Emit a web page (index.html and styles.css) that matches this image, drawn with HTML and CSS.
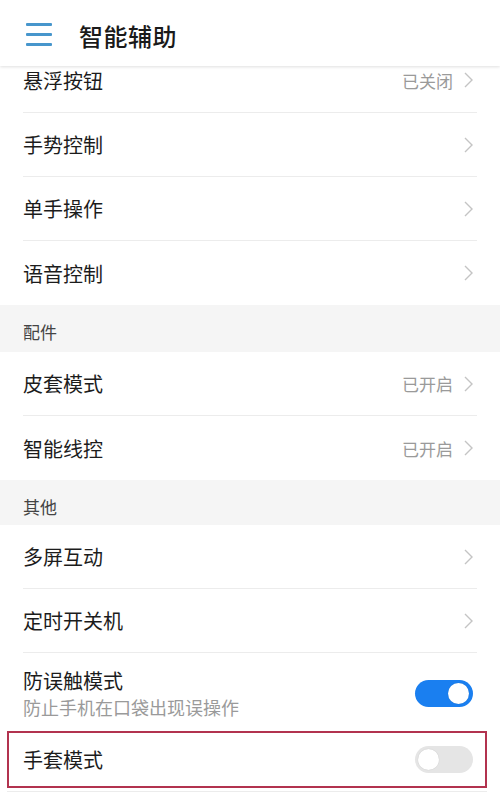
FILE: index.html
```html
<!DOCTYPE html>
<html lang="zh-CN">
<head>
  <meta charset="UTF-8">
  <title>智能辅助</title>
  <meta name="viewport" content="width=device-width, initial-scale=1.0">
  <link rel="stylesheet" href="styles.css">
</head>
<body>
  <header class="topbar">
    <span class="menu"><i></i><i></i><i></i></span>
    <h1>智能辅助</h1>
  </header>

  <div class="list">
    <div class="row cut">
      <span class="label">悬浮按钮</span>
      <span class="value">已关闭</span>
      <svg class="chev" viewBox="0 0 9 16"><polyline points="1,1 8,8 1,15"/></svg>
    </div>
    <div class="row">
      <span class="label">手势控制</span>
      <svg class="chev" viewBox="0 0 9 16"><polyline points="1,1 8,8 1,15"/></svg>
    </div>
    <div class="row">
      <span class="label">单手操作</span>
      <svg class="chev" viewBox="0 0 9 16"><polyline points="1,1 8,8 1,15"/></svg>
    </div>
    <div class="row last">
      <span class="label">语音控制</span>
      <svg class="chev" viewBox="0 0 9 16"><polyline points="1,1 8,8 1,15"/></svg>
    </div>

    <div class="section">配件</div>
    <div class="row">
      <span class="label">皮套模式</span>
      <span class="value">已开启</span>
      <svg class="chev" viewBox="0 0 9 16"><polyline points="1,1 8,8 1,15"/></svg>
    </div>
    <div class="row last">
      <span class="label">智能线控</span>
      <span class="value">已开启</span>
      <svg class="chev" viewBox="0 0 9 16"><polyline points="1,1 8,8 1,15"/></svg>
    </div>

    <div class="section other">其他</div>
    <div class="row">
      <span class="label">多屏互动</span>
      <svg class="chev" viewBox="0 0 9 16"><polyline points="1,1 8,8 1,15"/></svg>
    </div>
    <div class="row">
      <span class="label">定时开关机</span>
      <svg class="chev" viewBox="0 0 9 16"><polyline points="1,1 8,8 1,15"/></svg>
    </div>
    <div class="row tall last">
      <div class="texts">
        <span class="label">防误触模式</span>
        <span class="sub">防止手机在口袋出现误操作</span>
      </div>
      <span class="switch on"><b></b></span>
    </div>
    <div class="row marked last">
      <span class="label">手套模式</span>
      <span class="switch"><b></b></span>
    </div>
    <div class="tail"></div>
  </div>
</body>
</html>
```

FILE: styles.css
```css
body { margin: 0; background: #fff; font-family: "Noto Sans CJK SC", "Noto Sans", sans-serif; color: #1c1c1c; }

.topbar { height: 66px; box-sizing: border-box; padding: 5px 0 0 26px; display: flex; align-items: center; box-shadow: 0 1px 3px rgba(0,0,0,0.13); position: relative; z-index: 1; }
.menu { width: 26px; display: flex; flex-direction: column; gap: 7px; margin-right: 27px; margin-top: -2px; }
.menu i { display: block; height: 3px; background: #4796cc; border-radius: 1px; }
.topbar h1 { margin: 0; font-size: 24px; font-weight: 500; color: #1a1a1a; letter-spacing: 0.5px; }

.row { height: 64px; box-sizing: border-box; margin: 0 23px; padding-right: 4px; display: flex; align-items: center; border-bottom: 1px solid #ececec; }
.row.last { border-bottom: none; }
.row.cut { height: 47px; padding-bottom: 18px; }
.row.tall { height: 78px; padding-top: 2px; }
.label { font-size: 20px; flex: 1; }
.value { font-size: 17px; color: #9a9a9a; margin-right: 11px; }
.chev { width: 9px; height: 16px; fill: none; stroke: #c4c4c4; stroke-width: 1.4; }

.texts { flex: 1; display: flex; flex-direction: column; }
.texts .label { line-height: 28px; }
.sub { font-size: 18px; color: #9a9a9a; line-height: 25px; }

.section { height: 47px; box-sizing: border-box; background: #f5f5f5; padding: 0 23px 8px; display: flex; align-items: flex-end; font-size: 17px; color: #444; }
.section.other { height: 45px; padding-bottom: 6px; }

.switch { width: 58px; height: 27px; border-radius: 14px; background: #e5e5e5; position: relative; }
.switch b { position: absolute; top: 3px; left: 3px; width: 21px; height: 21px; border-radius: 50%; background: #fff; box-shadow: 0 0 1px rgba(0,0,0,0.2); }
.switch.on { background: #1a7ff0; }
.switch.on b { left: auto; right: 4px; }

.row.marked { height: 57px; margin: 0 13px 0 7px; padding: 0 12px 0 14px; border: 2px solid #b2334f; }
.tail { height: 11px; border-top: 1px solid #ececec; margin: 3px 13px 0 7px; }
```
